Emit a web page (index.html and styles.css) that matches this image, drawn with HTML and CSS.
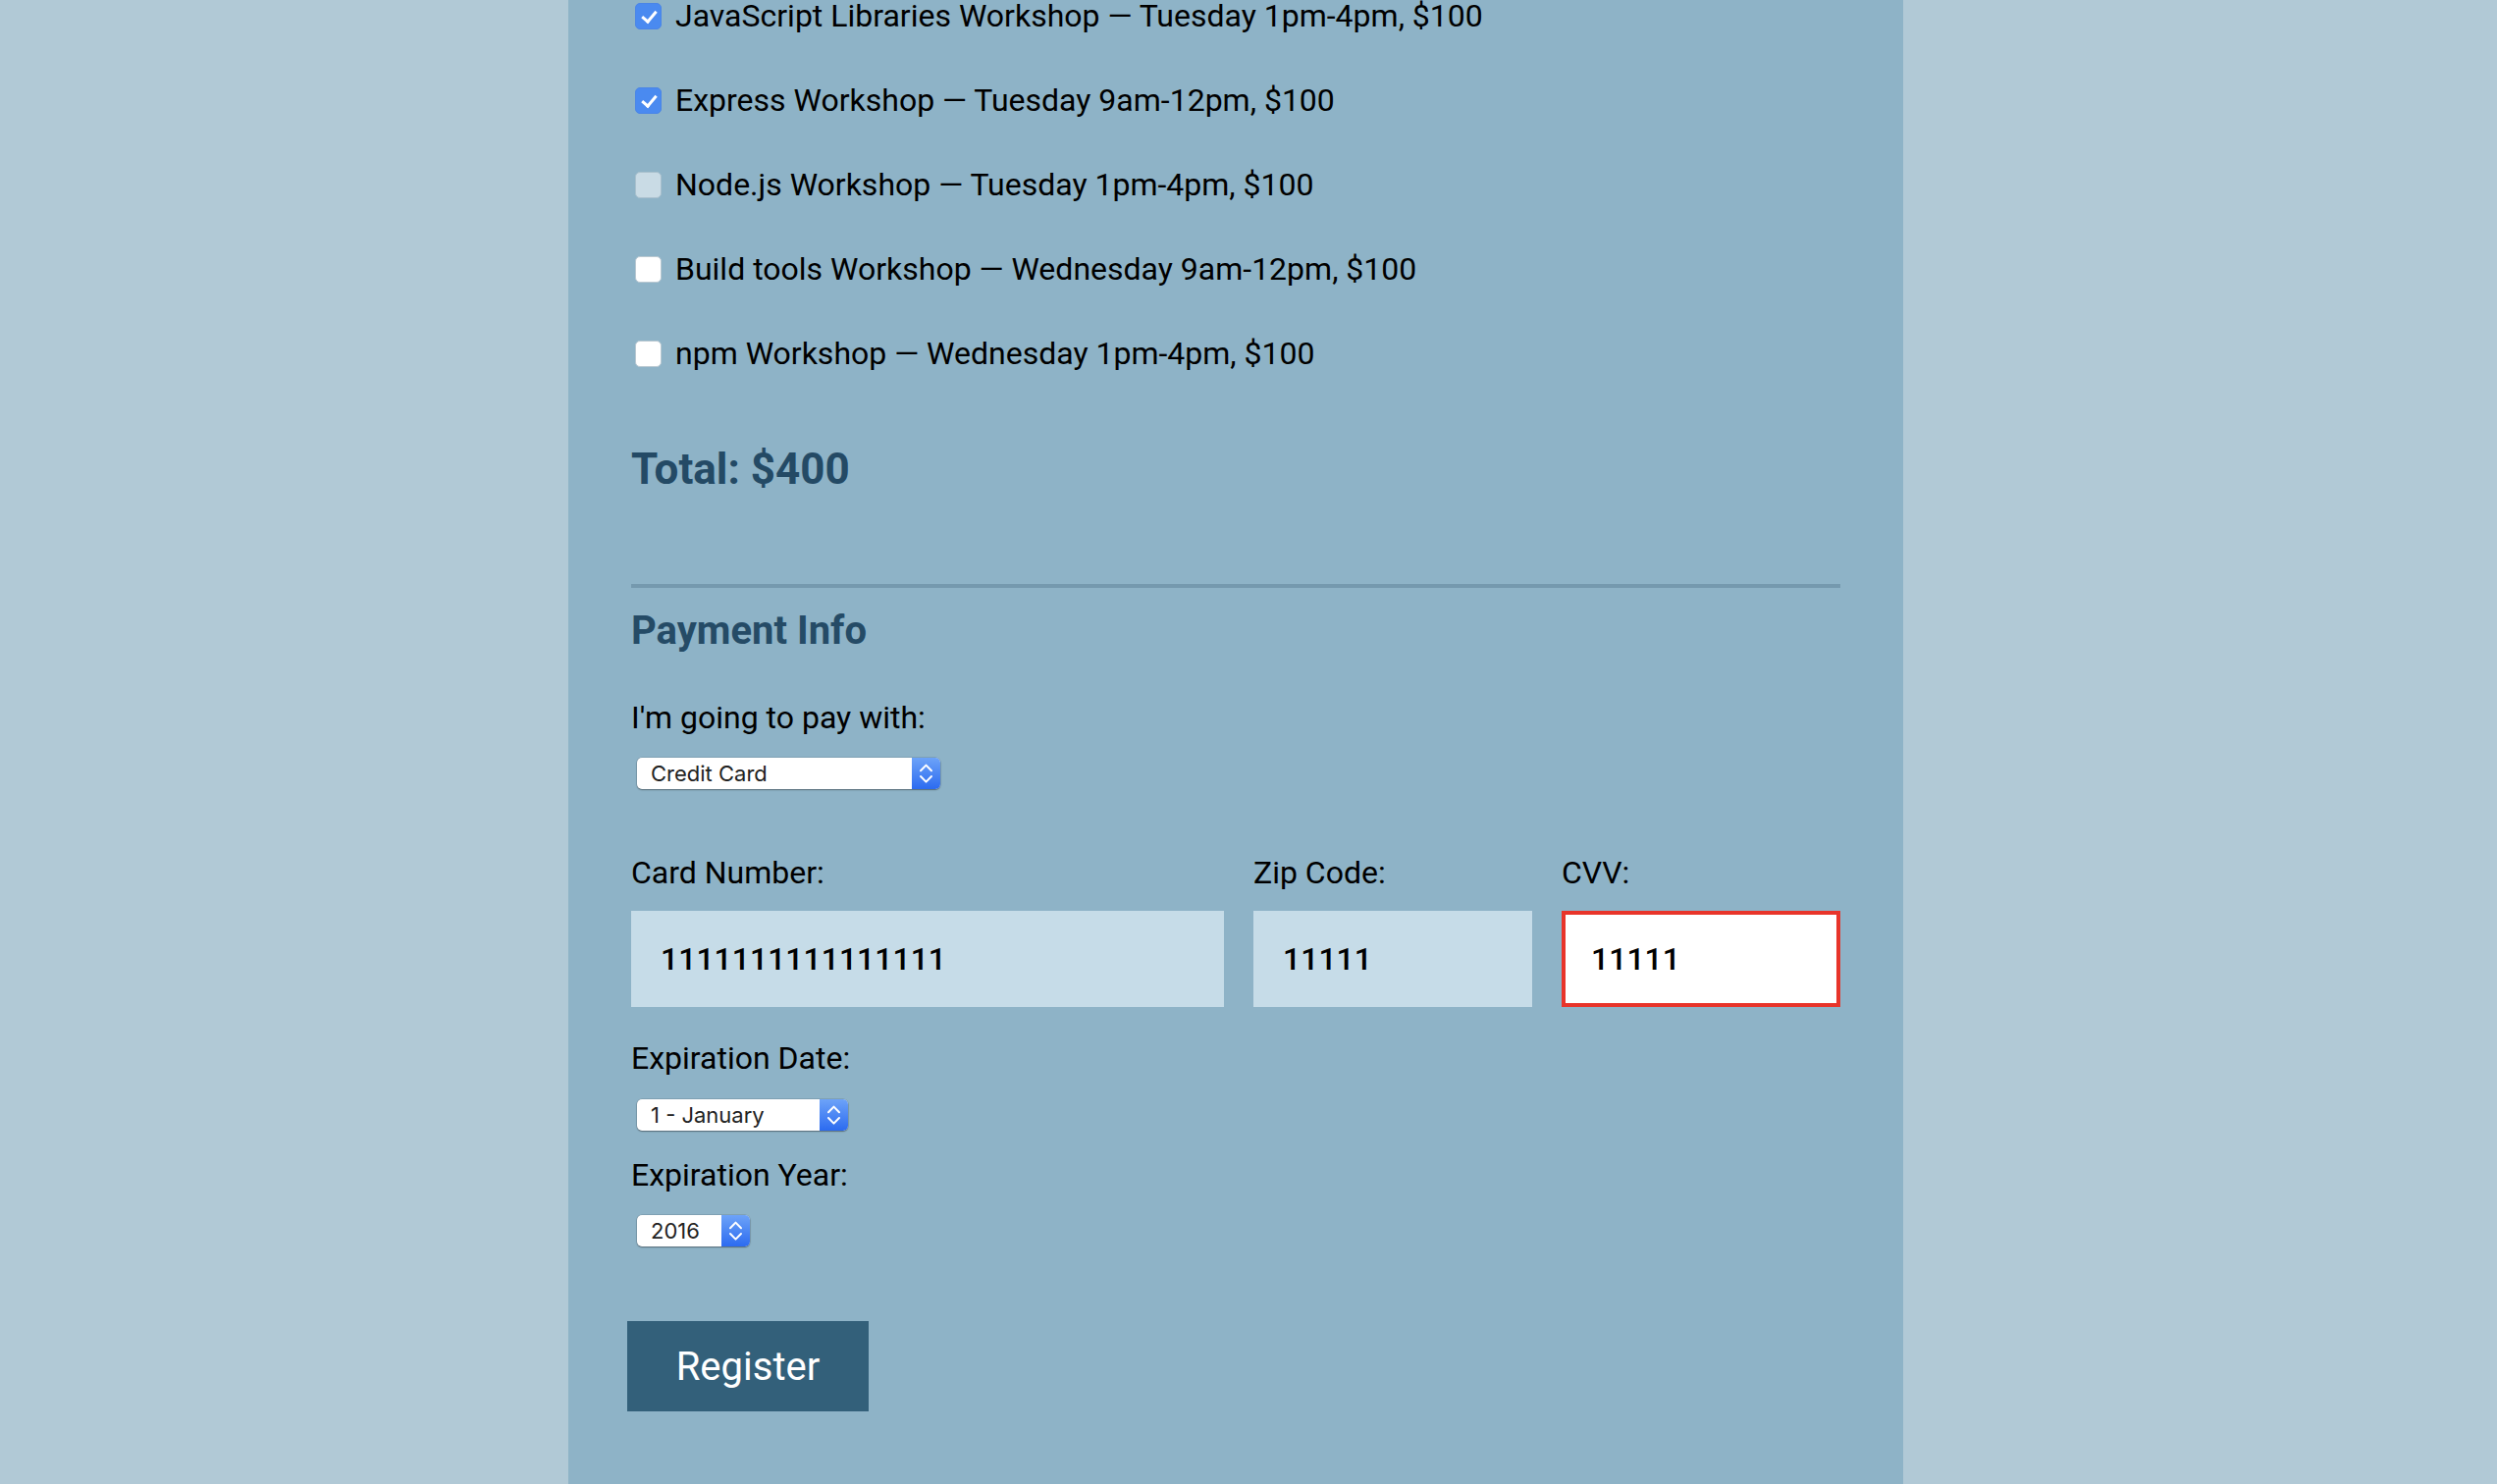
FILE: index.html
```html
<!DOCTYPE html>
<html lang="en">
<head>
<meta charset="utf-8">
<title>Register</title>
<link rel="stylesheet" href="styles.css">
</head>
<body>
<div class="page">
  <form class="form">
    <fieldset class="activities">
      <label class="activity"><input type="checkbox" class="check" checked><span>JavaScript Libraries Workshop — Tuesday 1pm-4pm, $100</span></label>
      <label class="activity"><input type="checkbox" class="check" checked><span>Express Workshop — Tuesday 9am-12pm, $100</span></label>
      <label class="activity"><input type="checkbox" class="check check-disabled" disabled><span>Node.js Workshop — Tuesday 1pm-4pm, $100</span></label>
      <label class="activity"><input type="checkbox" class="check"><span>Build tools Workshop — Wednesday 9am-12pm, $100</span></label>
      <label class="activity"><input type="checkbox" class="check"><span>npm Workshop — Wednesday 1pm-4pm, $100</span></label>
    </fieldset>

    <p class="total">Total: $400</p>

    <hr class="divider">

    <fieldset class="payment">
      <h2 class="legend">Payment Info</h2>
      <label class="field-label pay-label">I'm going to pay with:</label>
      <div class="select-wrap select-payment">
        <select class="select"><option>Credit Card</option></select>
        <span class="select-arrows"><svg width="29" height="32" viewBox="0 0 29 32"><path d="M9 13.2 L14.5 7.6 L20 13.2 M9 19 L14.5 24.6 L20 19" fill="none" stroke="#fff" stroke-width="2" stroke-linecap="round" stroke-linejoin="round"/></svg></span>
      </div>

      <div class="card-grid">
        <label class="field-label">Card Number:</label>
        <label class="field-label">Zip Code:</label>
        <label class="field-label">CVV:</label>
        <input class="text-input" type="text" value="1111111111111111">
        <input class="text-input" type="text" value="11111">
        <input class="text-input text-input-error" type="text" value="11111">
      </div>

      <label class="field-label exp-date-label">Expiration Date:</label>
      <div class="select-wrap select-month">
        <select class="select"><option>1 - January</option></select>
        <span class="select-arrows"><svg width="29" height="32" viewBox="0 0 29 32"><path d="M9 13.2 L14.5 7.6 L20 13.2 M9 19 L14.5 24.6 L20 19" fill="none" stroke="#fff" stroke-width="2" stroke-linecap="round" stroke-linejoin="round"/></svg></span>
      </div>

      <label class="field-label exp-year-label">Expiration Year:</label>
      <div class="select-wrap select-year">
        <select class="select"><option>2016</option></select>
        <span class="select-arrows"><svg width="29" height="32" viewBox="0 0 29 32"><path d="M9 13.2 L14.5 7.6 L20 13.2 M9 19 L14.5 24.6 L20 19" fill="none" stroke="#fff" stroke-width="2" stroke-linecap="round" stroke-linejoin="round"/></svg></span>
      </div>
    </fieldset>

    <button type="button" class="register">Register</button>
  </form>
</div>
</body>
</html>
```

FILE: styles.css
```css
* {
  box-sizing: border-box;
}

html, body {
  margin: 0;
  padding: 0;
}

body {
  background: #b1c9d6;
  font-family: Roboto, "Liberation Sans", sans-serif;
  color: #000;
  min-height: 1512px;
}

.page {
  width: 1360px;
  min-height: 1512px;
  margin-left: calc(50% - 693px);
  background: #8eb3c7;
  padding: 0 64px;
}

.form {
  display: flex;
  flex-direction: column;
  align-items: flex-start;
}

fieldset {
  border: 0;
  margin: 0;
  padding: 0;
  min-width: 0;
  width: 100%;
  display: flex;
  flex-direction: column;
  align-items: flex-start;
}

.activity {
  display: flex;
  align-items: center;
  height: 32px;
  margin-bottom: 54px;
  font-size: 32px;
  line-height: 32px;
  gap: 14px;
}

.activity:last-child {
  margin-bottom: 0;
}

.check {
  appearance: none;
  -webkit-appearance: none;
  width: 27px;
  height: 27px;
  margin: 0 0 0 4px;
  border-radius: 5px;
  background: #fff;
  border: 1px solid #b9c8d1;
  position: relative;
  flex: none;
}

.check:checked {
  background: #4a8af0;
  border-color: #4a85e6;
}

.check:checked::after {
  content: "";
  position: absolute;
  left: 9px;
  top: 4px;
  width: 6px;
  height: 12px;
  border-right: 3px solid #fff;
  border-bottom: 3px solid #fff;
  transform: rotate(40deg);
}

.check-disabled {
  background: #c9dbe5;
  border-color: #a9c0cd;
}

.total {
  margin: 80px 0 0 0;
  font-size: 44px;
  line-height: 44px;
  font-weight: 700;
  color: #244a65;
}

.divider {
  width: 100%;
  margin: 95px 0 0 0;
  height: 4px;
  border: 0;
  background: #7599ae;
}

.legend {
  margin: 24px 0 0 0;
  font-size: 40px;
  line-height: 40px;
  font-weight: 700;
  color: #254b66;
}

.field-label {
  display: block;
  font-size: 32px;
  line-height: 32px;
  color: #000;
}

.pay-label {
  margin-top: 52px;
}

.select-wrap {
  position: relative;
  height: 32px;
  margin: 25px 0 0 6px;
  border-radius: 5px;
  background: #fff;
  box-shadow: 0 1px 1.5px rgba(0, 0, 0, 0.35), 0 0 0 0.5px rgba(0, 0, 0, 0.18);
}

.select {
  appearance: none;
  -webkit-appearance: none;
  display: block;
  width: 100%;
  height: 32px;
  border: 0;
  border-radius: 5px;
  background: transparent;
  padding: 0 0 0 14px;
  font-family: Inter, "Noto Sans", "Liberation Sans", sans-serif;
  font-size: 22px;
  color: #222;
}

.select-arrows {
  position: absolute;
  right: 0;
  top: 0;
  width: 29px;
  height: 32px;
  border-radius: 0 5px 5px 0;
  background: linear-gradient(#6da3f8, #2c6bf0);
  display: flex;
}

.select-payment {
  width: 309px;
}

.select-month {
  width: 215px;
  margin-top: 26px;
}

.select-year {
  width: 115px;
}

.card-grid {
  width: 100%;
  margin-top: 69px;
  display: grid;
  grid-template-columns: 604px 1fr 1fr;
  column-gap: 30px;
  row-gap: 23px;
}

.text-input {
  height: 98px;
  width: 100%;
  border: 0;
  background: #c6dce8;
  padding: 0 30px;
  font-family: Roboto, "Liberation Sans", sans-serif;
  font-size: 32px;
  font-weight: 500;
  color: #000;
  outline: none;
}

.text-input-error {
  background: #fff;
  border: 4px solid #e8342a;
  padding: 0 26px;
}

.exp-date-label {
  margin-top: 36px;
}

.exp-year-label {
  margin-top: 29px;
}

.register {
  margin: 76px 0 0 -4px;
  width: 246px;
  height: 92px;
  border: 0;
  background: #33607a;
  color: #fff;
  font-family: Roboto, "Liberation Sans", sans-serif;
  font-size: 40px;
  padding: 0;
}
```
